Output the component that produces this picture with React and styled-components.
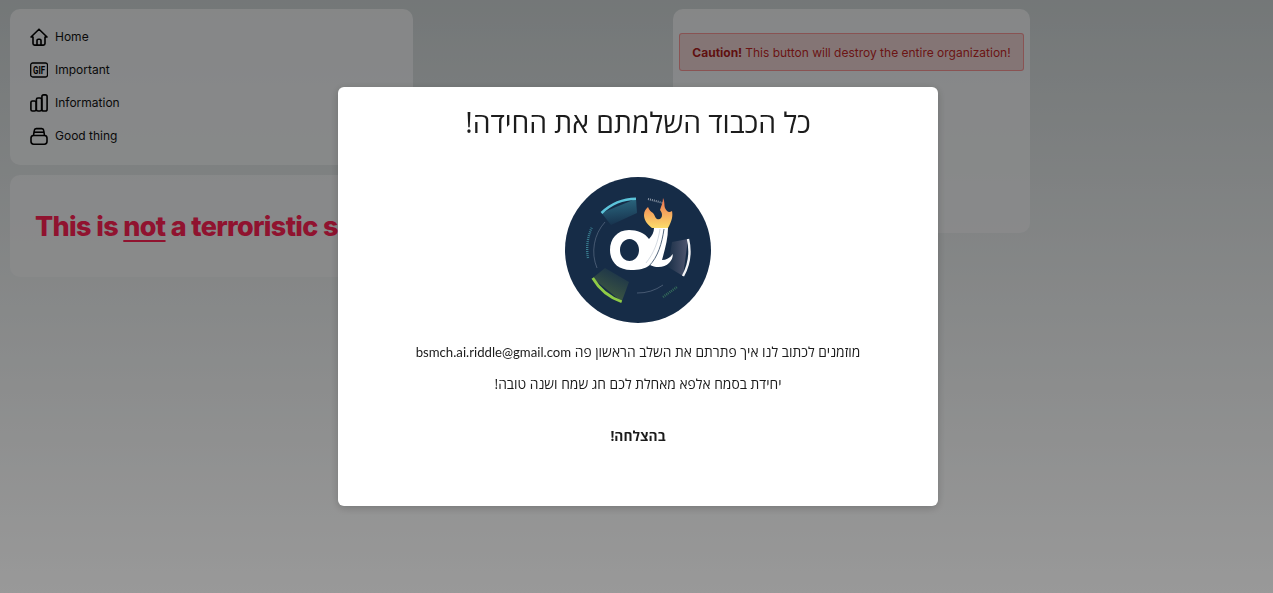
import React from 'react'
import styled, { createGlobalStyle } from 'styled-components'

const GlobalStyle = createGlobalStyle`
  html, body {
    margin: 0;
    padding: 0;
    height: 100%;
  }
  body {
    font-family: Inter, "Liberation Sans", sans-serif;
    background: linear-gradient(180deg, #c1c7c8 0%, #ffffff 100%);
    background-attachment: fixed;
  }
`

const Page = styled.div`
  display: grid;
  grid-template-columns: 403px 357px;
  column-gap: 260px;
  align-items: start;
  padding: 9px 10px;
  min-height: 100vh;
  box-sizing: border-box;
`

const Column = styled.div`
  display: flex;
  flex-direction: column;
  gap: 10px;
`

const Card = styled.div`
  background: rgba(230, 231, 233, 0.8);
  border-radius: 10px;
  box-sizing: border-box;
`

const NavCard = styled(Card)`
  height: 156px;
  padding: 11px 20px;
  display: flex;
  flex-direction: column;
`

const NavRow = styled.a`
  height: 33px;
  display: flex;
  align-items: center;
  gap: 7px;
  font-size: 12px;
  color: #111;
  text-decoration: none;
`

const HeadingCard = styled(Card)`
  height: 102px;
  padding: 0 25px;
  display: flex;
  align-items: center;
`

const Heading = styled.h1`
  margin: 0;
  font-size: 27px;
  font-weight: 800;
  letter-spacing: -0.65px;
  white-space: nowrap;
  color: #f0204f;

  u {
    text-decoration-thickness: 2px;
    text-underline-offset: 4px;
  }
`

const AlertCard = styled(Card)`
  height: 224px;
  padding: 24px 6px;
`

const Alert = styled.div`
  height: 38px;
  box-sizing: border-box;
  display: flex;
  align-items: center;
  justify-content: center;
  gap: 3px;
  font-size: 12px;
  white-space: nowrap;
  color: #b32424;
  background: rgba(200, 40, 40, 0.16);
  border: 1px solid rgba(239, 68, 68, 0.45);
  border-radius: 3px;

  b {
    font-weight: 700;
    color: #a01c1c;
  }
`

const Overlay = styled.div`
  position: fixed;
  inset: 0;
  padding-left: 3px;
  background: rgba(0, 0, 0, 0.4);
  display: flex;
  align-items: center;
  justify-content: center;
`

const Modal = styled.div`
  width: 600px;
  height: 419px;
  box-sizing: border-box;
  padding: 15px 40px 0;
  background: #fff;
  border-radius: 6px;
  box-shadow: 0 2px 8px rgba(0, 0, 0, 0.2);
  display: flex;
  flex-direction: column;
  align-items: center;
  direction: rtl;
  font-family: "Open Sans", "Noto Sans", sans-serif;
  color: #1c1c1c;
`

const Title = styled.h2`
  margin: 0 0 35px;
  font-size: 28.3px;
  line-height: 40px;
  font-weight: 400;
`

const Line = styled.p`
  margin: 0 0 ${(p) => p.$after}px;
  font-size: 13.8px;
  line-height: 20px;
  font-weight: ${(p) => (p.$bold ? 700 : 400)};
  text-align: center;
`

const Email = styled.span`
  font-family: Lato, "Open Sans", sans-serif;
  font-size: 13.2px;
`

const Logo = styled.svg`
  width: 146px;
  height: 146px;
  margin-bottom: 19px;
  flex: none;
`

const HomeIcon = () => (
  <svg width="18" height="18" viewBox="0 0 18 18" fill="none" stroke="#000" strokeWidth="1.6" strokeLinejoin="round" strokeLinecap="round">
    <path d="M1 9 9 1.2 17 9h-2v6.5a1.6 1.6 0 0 1-1.6 1.6H4.6A1.6 1.6 0 0 1 3 15.5V9Z" />
    <path d="M7 17v-4.5a1.2 1.2 0 0 1 1.2-1.2h1.6a1.2 1.2 0 0 1 1.2 1.2V17" />
  </svg>
)

const GifIcon = () => (
  <svg width="18" height="16" viewBox="0 0 18 16" fill="none">
    <rect x="0.7" y="1" width="16.8" height="14" rx="2" stroke="#000" strokeWidth="1.3" />
    <text x="9.1" y="12" textAnchor="middle" fontFamily="Roboto, sans-serif" fontWeight="700" fontSize="10" fill="#000" textLength="12" lengthAdjust="spacingAndGlyphs">GIF</text>
  </svg>
)

const BarsIcon = () => (
  <svg width="18" height="18" viewBox="0 0 18 18" fill="none" stroke="#000" strokeWidth="1.6" strokeLinejoin="round">
    <rect x="0.9" y="7" width="5.2" height="10" rx="1.6" />
    <rect x="6.4" y="4" width="5.2" height="13" rx="1.6" />
    <rect x="11.9" y="0.9" width="5.2" height="16.100" rx="1.800" />
  </svg>
)

const BoxIcon = () => (
  <svg width="18" height="18" viewBox="0 0 18 18" fill="none" stroke="#000" strokeWidth="1.6" strokeLinejoin="round">
    <rect x="1" y="8.500" width="16" height="8.700" rx="2.600" />
    <path d="M3.500 8.500 4.300 3.400A2 2 0 0 1 6.300 1.600h5.400a2 2 0 0 1 2 1.800L14.500 8.500" />
    <path d="M4 5.200h10" />
  </svg>
)

const items = [
  { label: 'Home', icon: <HomeIcon /> },
  { label: 'Important', icon: <GifIcon /> },
  { label: 'Information', icon: <BarsIcon /> },
  { label: 'Good thing', icon: <BoxIcon /> },
]

const LogoMark = () => (
  <Logo viewBox="0 0 146 146">
    <defs>
      <linearGradient id="flame" x1="0" y1="0" x2="0" y2="1">
        <stop offset="0" stopColor="#ee6f4d" />
        <stop offset="0.5" stopColor="#f5a75e" />
        <stop offset="1" stopColor="#fcdc6a" />
      </linearGradient>
      <linearGradient id="wedgeCyan" x1="0.6" y1="0" x2="0.75" y2="1">
        <stop offset="0" stopColor="#2b6880" />
        <stop offset="1" stopColor="#162f4a" />
      </linearGradient>
      <linearGradient id="wedgeGreen" x1="0.2" y1="1" x2="0.7" y2="0">
        <stop offset="0" stopColor="#46603f" />
        <stop offset="1" stopColor="#19314a" />
      </linearGradient>
      <linearGradient id="wedgeWhite" x1="1" y1="0.5" x2="0" y2="0.5">
        <stop offset="0" stopColor="#50566f" />
        <stop offset="1" stopColor="#1c3149" />
      </linearGradient>
    </defs>
    <circle cx="73" cy="73" r="73" fill="#162c47" />
    <path d="M36.500 36 71 21.800 72 36 46 48Z" fill="url(#wedgeCyan)" />
    <path d="M27.700 101 56.700 124.700 64 105 40 91Z" fill="url(#wedgeGreen)" />
    <path d="M123 62 118 99 103 90 107 65Z" fill="url(#wedgeWhite)" />
    <path d="M36.500 36A51 51 0 0 1 71 21.800" fill="none" stroke="#5cc4da" strokeWidth="2.600" />
    <path d="M27.700 101A54 54 0 0 0 56.700 124.700" fill="none" stroke="#8fcb46" strokeWidth="2.800" />
    <path d="M123 62A52 52 0 0 1 118 99" fill="none" stroke="#f3f4f6" strokeWidth="2.400" />
    <path d="M32 91A44 44 0 0 1 40 45" fill="none" stroke="#53657c" strokeWidth="0.800" />
    <path d="M72 116A44 44 0 0 0 98 108" fill="none" stroke="#53657c" strokeWidth="0.800" />
    <path d="M23 81A52 52 0 0 1 27 50" fill="none" stroke="#3a7f92" strokeWidth="2.400" strokeDasharray="1 1" />
    <path d="M98 120 112 110" fill="none" stroke="#356d5a" strokeWidth="2.400" strokeDasharray="1 1" />
    <path d="M83 22 98 26" fill="none" stroke="#8d98a6" strokeWidth="2" strokeDasharray="1 1" />
    <path fillRule="evenodd" fill="#fff" d="M64 53C52 53 45 62 45 73C45 85 53 93 66 93C74 93 80 92 85 88C90 91 100 91 104 86C107 83 108 80 107.700 77C105 81 101 83 97 83C100 72 103 62 103 51L89 51C89 55 87 59 84 62C80 56 72 53 64 53ZM64.500 62C59 62 55 67 55 73C55 79 59 84 64.500 84C70 84 74 79 74 73C74 67 70 62 64.500 62Z" />
    <path d="M99 52C97 66 93 80 84 89" fill="none" stroke="#41566e" strokeWidth="0.900" />
    <path d="M95 52C93 65 89 76 81 86" fill="none" stroke="#c3ccd6" strokeWidth="0.700" />
    <path fill="url(#flame)" d="M87 51C82 47 79 43 79 38C79 34 81 32 83 30C84 33 86 35 88 36C90 38 90 41 92 42C95 43 97 41 97 38C97 36 96 34 95 33C96 29 98 26 98 21C100 25 99 28 100 31C102 35 104 36 107 34C108 39 107 44 103 51Z" />
  </Logo>
)

const App = () => {
  return (
    <>
      <GlobalStyle />
      <Page>
        <Column>
          <NavCard>
            {items.map((item) => (
              <NavRow key={item.label}>
                {item.icon}
                <span>{item.label}</span>
              </NavRow>
            ))}
          </NavCard>
          <HeadingCard>
            <Heading>
              This is <u>not</u> a terroristic site
            </Heading>
          </HeadingCard>
        </Column>
        <AlertCard>
          <Alert>
            <b>Caution!</b> This button will destroy the entire organization!
          </Alert>
        </AlertCard>
      </Page>
      <Overlay>
        <Modal>
          <Title>כל הכבוד השלמתם את החידה!</Title>
          <LogoMark />
          <Line $after={12}>מוזמנים לכתוב לנו איך פתרתם את השלב הראשון פה <Email>bsmch.ai.riddle@gmail.com</Email></Line>
          <Line $after={32}>יחידת בסמח אלפא מאחלת לכם חג שמח ושנה טובה!</Line>
          <Line $after={0} $bold>בהצלחה!</Line>
        </Modal>
      </Overlay>
    </>
  )
}

export default App
